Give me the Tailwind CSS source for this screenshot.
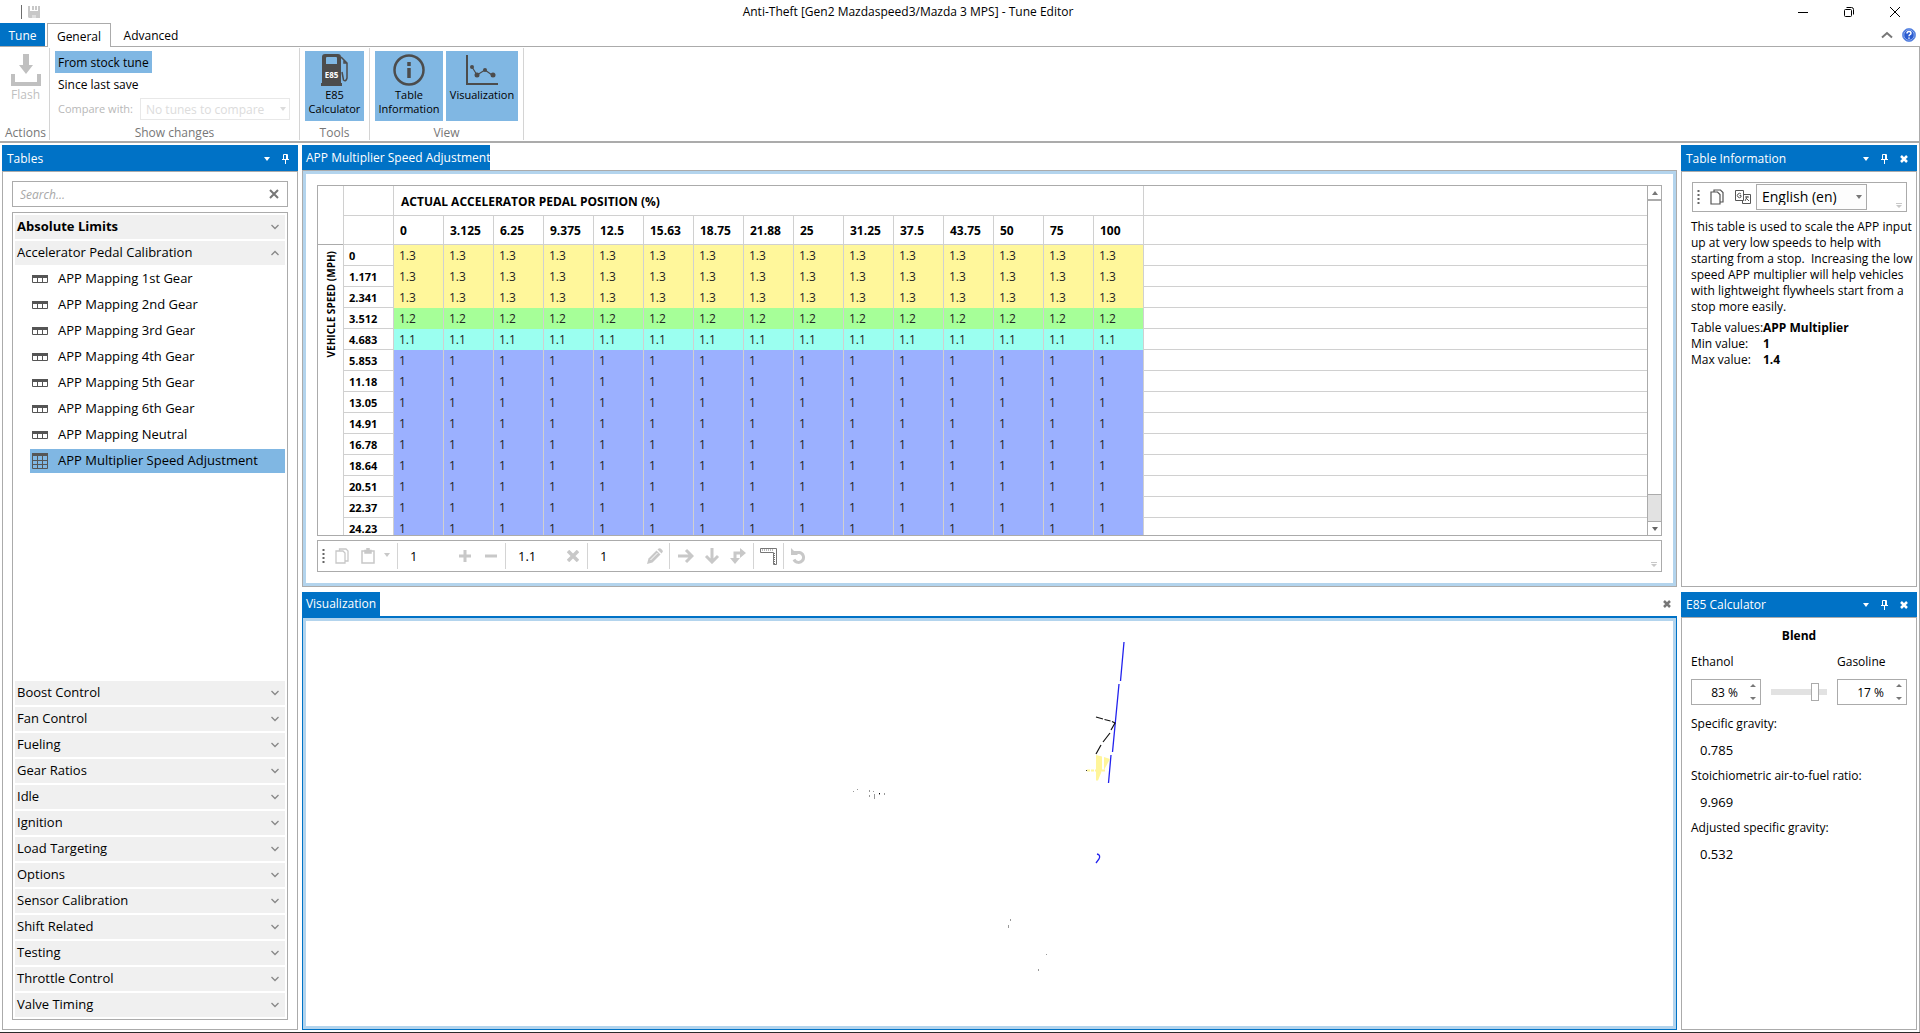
<!DOCTYPE html>
<html lang="en">
<head>
<meta charset="utf-8">
<title>Tune Editor</title>
<script src="https://cdn.jsdelivr.net/npm/@tailwindcss/browser@4"></script>
</head>
<body class="bg-white text-black text-[12px] leading-4 font-['Open_Sans','Noto_Sans',sans-serif]">
<div class="h-screen flex flex-col overflow-hidden border-b border-[#2b2b2b]">

  <header class="h-[23px] shrink-0 flex items-center">
    <div class="w-[104px] flex items-center pl-[21px] gap-[6px]">
      <span class="w-px h-[14px] bg-[#6d6d6d]"></span>
      <button aria-label="Save" class="text-[#c8c8c8]"><svg width="12" height="12" viewBox="0 0 12 12" fill="currentColor"><path d="M0 0h2v5h8V0h2v12H1l-1-1z"/><path d="M4 0h2v4H4zM7 0h2v4H7z"/><path d="M2 5h8v7H2z"/><path d="M4 9h4v3H4z" fill="#dedede"/></svg></button>
    </div>
    <h1 class="flex-1 text-center">Anti-Theft [Gen2 Mazdaspeed3/Mazda 3 MPS] - Tune Editor</h1>
    <div class="w-[208px] flex justify-end gap-[34px] pr-[19px]">
      <button aria-label="Minimize"><svg width="12" height="12" viewBox="0 0 12 12"><path d="M1 6.500h10" stroke="#000"/></svg></button>
      <button aria-label="Restore"><svg width="12" height="12" viewBox="0 0 12 12" fill="none" stroke="#000"><rect x="1.500" y="3.500" width="7" height="7" rx="1"/><path d="M3.500 1.500h5q2 0 2 2v5"/></svg></button>
      <button aria-label="Close"><svg width="12" height="12" viewBox="0 0 12 12" stroke="#000"><path d="M1 1l10 10M11 1L1 11"/></svg></button>
    </div>
  </header>

  <nav class="h-[24px] shrink-0 flex border-b border-[#ababab]">
    <button class="w-[45px] pt-[2px] bg-[#0072c6] text-white">Tune</button>
    <button class="ml-[2px] w-[64px] pt-[2px] -mb-px border border-b-0 border-[#ababab] bg-white">General</button>
    <button class="w-[80px] pt-[2px]">Advanced</button>
    <div class="ml-auto flex items-center gap-[9px] pr-[4px]">
      <button aria-label="Collapse ribbon"><svg width="12" height="8" viewBox="0 0 12 8" fill="none" stroke="#777" stroke-width="2"><path d="M1 6.500L6 2l5 4.500"/></svg></button>
      <button aria-label="Help"><svg width="14" height="14" viewBox="0 0 14 14"><circle cx="7" cy="7" r="6.500" fill="#2a5bd0" stroke="#6f97e8"/><circle cx="7" cy="7" r="5.200" fill="none" stroke="#cfe0ff" stroke-width=".6"/><path d="M5 5.500q0-2 2-2t2 1.700q0 1-1 1.500T7 8.200M7 9.400v1.400" fill="none" stroke="#fff" stroke-width="1.500"/></svg></button>
    </div>
  </nav>

  <div class="flex-1 min-h-0 flex flex-col border-r border-[#ababab]">
  <section aria-label="Ribbon" class="h-[96px] shrink-0 flex py-px border-b-2 border-[#ababab] text-center">
    <div class="w-[50px] pl-[2px] flex flex-col justify-between border-r border-[#d4d4d4] text-[#777]">
      <button disabled class="pt-[6px] text-[#c0c0c0] flex flex-col items-center">
        <svg width="30" height="32" viewBox="0 0 30 32" fill="currentColor"><path d="M12 0h6v11h4l-7 9-7-9h4zM0 20h4v8h22v-8h4v12H0z"/></svg>
        <span class="mt-px">Flash</span>
      </button>
      <span class="-mb-px">Actions</span>
    </div>
    <div class="w-[250px] flex flex-col justify-between border-r border-[#d4d4d4] text-left">
      <div class="pl-[5px] pt-[3px] flex flex-col items-start">
        <button class="h-[22px] px-[3px] pt-[2px] bg-[#80b7e3]">From stock tune</button>
        <button class="h-[22px] px-[3px] pt-[2px]">Since last save</button>
        <div class="flex items-center mt-[3px] px-[3px] gap-[5px] text-[#b8b8b8]">
          <label for="cmp" class="w-[77px] whitespace-nowrap text-[11px]">Compare with:</label>
          <div class="relative">
            <select id="cmp" disabled class="appearance-none w-[150px] h-[22px] px-[5px] pt-[2px] border border-[#e8e8e8] text-[#dcdcdc]"><option>No tunes to compare</option></select>
            <svg class="absolute right-[4px] top-[9px]" width="6" height="4" viewBox="0 0 6 4"><path d="M0 0h6L3 4z" fill="#dcdcdc"/></svg>
          </div>
        </div>
      </div>
      <span class="text-center text-[#777] -mb-px">Show changes</span>
    </div>
    <div class="w-[70px] flex flex-col justify-between items-center border-r border-[#d4d4d4]">
      <button class="mt-[3px] w-[59px] h-[70px] pt-[3px] bg-[#80b7e3] flex flex-col items-center text-[11px] leading-[14px]">
        <svg class="shrink-0" width="30" height="32" viewBox="0 0 30 32"><path fill="#4c4c4c" d="M5 0h13q3 0 3 3v26h1v3H1v-3h1V3q0-3 3-3z"/><path fill="#80b7e3" d="M6 4q0-1 1-1h9q1 0 1 1v6H6z"/><path d="M21 3l6 6v15q-1 4-3.500 2L22 18M27 9h-3V6" fill="none" stroke="#4c4c4c" stroke-width="1.500"/><text x="11.500" y="24" text-anchor="middle" font-size="8" font-weight="700" fill="#fff">E85</text></svg>
        <span class="mt-[2px]">E85<br>Calculator</span>
      </button>
      <span class="text-[#777] -mb-px">Tools</span>
    </div>
    <div class="w-[154px] flex flex-col justify-between items-center border-r border-[#d4d4d4]">
      <div class="flex gap-[3px] mt-[3px]">
        <button class="w-[68px] h-[70px] pt-[3px] bg-[#80b7e3] flex flex-col items-center text-[11px] leading-[14px]">
          <svg class="shrink-0" width="32" height="32" viewBox="0 0 32 32" fill="none" stroke="#4c4c4c"><circle cx="16" cy="16" r="14.500" stroke-width="2.500"/><path d="M16 14v10M16 8v4" stroke-width="3.500"/></svg>
          <span class="mt-[2px]">Table<br>Information</span>
        </button>
        <button class="w-[72px] h-[70px] pt-[3px] bg-[#80b7e3] flex flex-col items-center text-[11px] leading-[14px]">
          <svg class="shrink-0" width="32" height="32" viewBox="0 0 32 32" fill="none" stroke="#4c4c4c"><path d="M1 1v29h31" stroke-width="2"/><path d="M6 13l5 8 8-5 7 5" stroke-width="1.200"/><g fill="#4c4c4c" stroke="none"><circle cx="6" cy="13" r="2"/><circle cx="11" cy="21" r="2.500"/><circle cx="19" cy="16" r="2"/><circle cx="27" cy="21" r="2.500"/></g></svg>
          <span class="mt-[2px]">Visualization</span>
        </button>
      </div>
      <span class="text-[#777] -mb-px">View</span>
    </div>
  </section>

  <main class="flex-1 min-h-0 flex gap-[4px] px-[2px] pt-[2px] pb-[2px]">
    <aside class="w-[296px] shrink-0 flex flex-col">
      <div class="h-[26px] shrink-0 bg-[#0072c6] text-white flex items-center pl-[5px] pr-[9px] pt-px">
        <h2 class="flex-1">Tables</h2>
        <div data-dock="menu pin" class="flex items-center gap-[12px]"></div>
      </div>
      <div class="flex-1 min-h-0 border border-[#ababab] flex flex-col px-[9px] pt-[9px] pb-[9px] gap-[5px]">
        <div class="h-[26px] shrink-0 border border-[#ababab] flex items-center pl-[7px] pr-[8px]">
          <input aria-label="Search" placeholder="Search..." class="flex-1 min-w-0 pt-[2px] outline-none placeholder:italic placeholder:text-[#a8a8a8]">
          <button aria-label="Clear search"><svg width="10" height="10" viewBox="0 0 10 10" stroke="#777" stroke-width="2"><path d="M1 1l8 8M9 1L1 9"/></svg></button>
        </div>
        <div id="list" class="flex-1 min-h-0 border border-[#ababab] p-[2px] flex flex-col gap-[2px] text-[13px]"></div>
      </div>
    </aside>

    <div class="flex-1 min-w-0 flex flex-col gap-[5px]">
      <section class="flex-[442_1_0px] min-h-0 flex flex-col">
        <div class="h-[25px] shrink-0 flex"><button class="w-[188px] pl-[4px] text-left bg-[#0072c6] text-white whitespace-nowrap">APP Multiplier Speed Adjustment</button></div>
        <div class="flex-1 min-h-0 border border-[#ababab]">
          <div class="h-full border-3 border-[#b3d4ed] px-[11px] pt-[11px] pb-[11px] flex flex-col gap-[4px]">
            <div class="flex-1 min-h-0 border border-[#ababab] flex">
              <div class="flex-1 min-w-0 overflow-hidden">
                <table class="w-full table-fixed border-separate border-spacing-0">
                  <colgroup id="cols"><col class="w-[25px]"><col class="w-[50px]"></colgroup>
                  <thead id="thead" class="text-left"></thead>
                  <tbody id="tbody"></tbody>
                </table>
              </div>
              <div class="w-[14px] shrink-0 border-l border-[#ababab] flex flex-col">
                <button aria-label="Scroll up" class="h-[13px] flex items-center justify-center"><svg width="6" height="4" viewBox="0 0 6 4"><path d="M0 4h6L3 0z" fill="#777"/></svg></button>
                <div class="flex-1 bg-[#e2e2e2] pb-[26px]"><div class="h-full bg-white border-t-2 border-b border-[#ababab]"></div></div>
                <button aria-label="Scroll down" class="h-[14px] border-t border-[#ababab] flex items-center justify-center"><svg width="6" height="4" viewBox="0 0 6 4"><path d="M0 0h6L3 4z" fill="#666"/></svg></button>
              </div>
            </div>
            <div role="toolbar" aria-label="Edit" class="h-[32px] shrink-0 border border-[#ababab] flex items-center pl-[4px] pr-[4px] text-[#c8c8c8]">
              <svg width="3" height="16" viewBox="0 0 3 16"><path d="M1.500 1v14" stroke="#666" stroke-width="2" stroke-dasharray="2 2"/></svg>
              <button aria-label="Copy" class="ml-[10px]"><svg width="14" height="16" viewBox="0 0 14 16" fill="#fff" stroke="currentColor" stroke-width="1.300"><path d="M4.500 1h6.500l2 2v10H4.500z"/><path d="M1 3h7l2 2v10H1z"/></svg></button>
              <button aria-label="Paste" class="ml-[12px]"><svg width="14" height="16" viewBox="0 0 14 16" fill="none" stroke="currentColor" stroke-width="1.500"><path d="M1 3h12v12H1z"/><path d="M4 2.500h6v2.500H4zM6 .8h2v2H6z" fill="currentColor"/></svg></button>
              <button aria-label="Paste options" class="ml-[9px] -mt-[2px]"><svg width="6" height="4" viewBox="0 0 6 4"><path d="M0 0h6L3 4z" fill="currentColor"/></svg></button>
              <span class="ml-[7px] w-px h-[26px] bg-[#d4d4d4]"></span>
              <input aria-label="Add amount" value="1" class="w-[61px] pl-[12px] text-black text-[13px]">
              <button aria-label="Add"><svg width="12" height="12" viewBox="0 0 12 12" stroke="currentColor" stroke-width="3"><path d="M0 6h12M6 0v12"/></svg></button>
              <button aria-label="Subtract" class="ml-[14px]"><svg width="12" height="12" viewBox="0 0 12 12" stroke="currentColor" stroke-width="3"><path d="M0 6h12"/></svg></button>
              <span class="ml-[8px] w-px h-[26px] bg-[#d4d4d4]"></span>
              <input aria-label="Multiply amount" value="1.1" class="w-[61px] pl-[12px] text-black text-[13px]">
              <button aria-label="Multiply"><svg width="12" height="12" viewBox="0 0 12 12" stroke="currentColor" stroke-width="3.500"><path d="M1 1l10 10M11 1L1 11"/></svg></button>
              <span class="ml-[8px] w-px h-[26px] bg-[#d4d4d4]"></span>
              <input aria-label="Set value" value="1" class="w-[59px] pl-[12px] text-black text-[13px]">
              <button aria-label="Set"><svg width="16" height="16" viewBox="0 0 16 16"><path d="M0 16l1.500-5.500L9.500 2.500l4 4L5.500 14.500z" fill="currentColor"/><path d="M10.500 1.500Q12.500-.5 14 .800l1.200 1.200Q16.500 3.500 14.500 5.500z" fill="currentColor"/><path d="M3.500 12l7-7" stroke="#fff"/></svg></button>
              <span class="ml-[6px] w-px h-[26px] bg-[#d4d4d4]"></span>
              <button aria-label="Fill right" class="ml-[8px]"><svg width="16" height="16" viewBox="0 0 16 16" fill="none" stroke="currentColor" stroke-width="3"><path d="M0 8h13M8 2l6 6-6 6"/></svg></button>
              <button aria-label="Fill down" class="ml-[10px]"><svg width="16" height="16" viewBox="0 0 16 16" fill="none" stroke="currentColor" stroke-width="3"><path d="M8 0v13M2 8l6 6 6-6"/></svg></button>
              <button aria-label="Fill both" class="ml-[10px]"><svg width="16" height="16" viewBox="0 0 16 16"><path d="M5 12V5h6" fill="none" stroke="currentColor" stroke-width="3"/><path d="M10 0l6 5-6 5zM0 10h10l-5 6z" fill="currentColor"/></svg></button>
              <span class="ml-[7px] w-px h-[26px] bg-[#d4d4d4]"></span>
              <button aria-label="Axes" class="ml-[6px]"><svg width="17" height="17" viewBox="0 0 17 17" fill="none" stroke="#777"><path d="M.5.5h16v16h-3V4.500H.5z"/><path d="M2 2h11M14.500 5v11" stroke-dasharray="1 1"/></svg></button>
              <span class="ml-[6px] w-px h-[26px] bg-[#d4d4d4]"></span>
              <button aria-label="Undo" class="ml-[7px]"><svg width="16" height="16" viewBox="0 0 16 16"><path d="M3 4.500h5.500a5 5 0 1 1-5.500 7" fill="none" stroke="currentColor" stroke-width="3"/><path d="M0 0l7 7H0z" fill="currentColor"/></svg></button>
              <svg class="ml-auto self-end mb-[4px]" width="6" height="5" viewBox="0 0 6 5"><path d="M0 0h6v1H0zM0 2h6L3 5z" fill="currentColor"/></svg>
            </div>
          </div>
        </div>
      </section>
      <section class="flex-[438_1_0px] min-h-0 flex flex-col">
        <div class="h-[24px] shrink-0 flex items-stretch justify-between pr-[6px]">
          <button class="w-[78px] bg-[#0072c6] text-white">Visualization</button>
          <button aria-label="Close visualization"><svg width="8" height="8" viewBox="0 0 8 8" stroke="#777" stroke-width="2.500"><path d="M1 1l6 6M7 1L1 7"/></svg></button>
        </div>
        <div class="flex-1 min-h-0 border border-t-2 border-[#0072c6]">
          <div class="h-full border-3 border-[#b3d4ed]">
            <svg class="block w-full h-full" viewBox="0 0 1367 405" fill="none"><g transform="translate(-306 -621)">
              <g stroke="#2222ee" stroke-width="1.300"><path d="M1124 642l-3.500 39M1119 684l-6.500 68M1111 755l-2.500 28"/><path d="M1097 854q4 1 2 5l-3 4"/></g>
              <path d="M1096 717l7 2M1104.500 719.500l6 1.500M1112 721.500l3 1.500-4 7M1110 733l-7 9M1101 745l-5 9" stroke="#111" stroke-width="1.200"/>
              <path d="M1096 755l6 1.500v14l-4 10h-2z" fill="#fff59a"/><path d="M1104 757l6 2-6 11z" fill="#fff59a"/><path d="M1087 770.500h9M1102 770.500h4" stroke="#fff59a" stroke-width="2" stroke-dasharray="3 1"/>
              <path d="M1086 771l1-1" stroke="#333"/>
              <path d="M857 789h1v1h-1zM874 794h1v5h-1zM879 793h1v2h-1zM884 793h1v2h-1zM869 790h1v2h-1zM869 795h1v2h-1zM873 791h1v1h-1zM853 791h1v1h-1z" fill="#999"/><path d="M879 793h1v1h-1z" fill="#000"/>
              <path d="M1010 919h1v2h-1zM1008 925h1v3h-1zM1046 954h1v1h-1zM1038 969h1v2h-1z" fill="#999"/>
            </g></svg>
          </div>
        </div>
      </section>
    </div>

    <div class="w-[236px] shrink-0 flex flex-col gap-[5px]">
      <section class="flex-[442_1_0px] min-h-0 flex flex-col">
        <div class="h-[26px] shrink-0 bg-[#0072c6] text-white flex items-center pl-[5px] pr-[9px] pt-px">
          <h2 class="flex-1">Table Information</h2>
          <div data-dock="menu pin close" class="flex items-center gap-[12px]"></div>
        </div>
        <div class="flex-1 min-h-0 border border-[#ababab] px-[9px] pt-[10px]">
          <div role="toolbar" aria-label="Language" class="h-[30px] ml-px border border-[#ababab] flex items-center pl-[4px] pr-[4px]">
            <svg width="3" height="16" viewBox="0 0 3 16"><path d="M1.500 1v14" stroke="#666" stroke-width="2" stroke-dasharray="2 2"/></svg>
            <button aria-label="Copy" class="ml-[10px]"><svg width="14" height="16" viewBox="0 0 14 16" fill="#fff" stroke="#555" stroke-width="1.200"><path d="M4 1h6.500L13 3.500V13H4z"/><path d="M1 3h6.500L10 5.500V15H1z"/></svg></button>
            <button aria-label="Translate" class="ml-[11px]"><svg width="16" height="15" viewBox="0 0 16 15" fill="#fff" stroke="#555"><path d="M7.500 4.500h8v9h-8z"/><path d="M.5.5h8v10h-8z"/><path d="M6 4Q4.500 2.500 3 4t0 3 3 0V5.500H4.500M10 7h4M12 6v1l-2 4M11 8l3 3" fill="none"/></svg></button>
            <div class="relative ml-[5px]">
              <select aria-label="Language" class="appearance-none w-[111px] h-[26px] pl-[5px] border border-[#ababab] bg-[#fdfdfd] text-[14px]"><option>English (en)</option></select>
              <svg class="absolute right-[5px] top-[11px]" width="6" height="4" viewBox="0 0 6 4"><path d="M0 0h6L3 4z" fill="#777"/></svg>
            </div>
            <svg class="ml-auto self-end mb-[3px]" width="6" height="5" viewBox="0 0 6 5"><path d="M0 0h6v1H0zM0 2h6L3 5z" fill="#c8c8c8"/></svg>
          </div>
          <p class="mt-[7px] whitespace-pre">This table is used to scale the APP input
up at very low speeds to help with
starting from a stop.&nbsp; Increasing the low
speed APP multiplier will help vehicles
with lightweight flywheels start from a
stop more easily.</p>
          <dl class="mt-[5px] grid grid-cols-[72px_1fr] whitespace-nowrap">
            <dt>Table values:</dt><dd class="font-bold">APP Multiplier</dd>
            <dt>Min value:</dt><dd class="font-bold">1</dd>
            <dt>Max value:</dt><dd class="font-bold">1.4</dd>
          </dl>
        </div>
      </section>
      <section class="flex-[438_1_0px] min-h-0 flex flex-col">
        <div class="h-[25px] shrink-0 bg-[#0072c6] text-white flex items-center pl-[5px] pr-[9px]">
          <h2 class="flex-1">E85 Calculator</h2>
          <div data-dock="menu pin close" class="flex items-center gap-[12px]"></div>
        </div>
        <div class="flex-1 min-h-0 border border-[#ababab] px-[9px] pt-[10px]">
          <h3 class="text-center font-bold">Blend</h3>
          <div class="mt-[10px] grid grid-cols-[70px_56px_70px] gap-x-[10px] gap-y-[9px] items-center">
            <label for="eth">Ethanol</label><span></span><label for="gas">Gasoline</label>
            <div class="h-[26px] border border-[#ababab] flex items-center pr-[4px]"><input id="eth" value="83 %" class="flex-1 min-w-0 text-right pr-[12px] pt-[2px]"><span data-spin></span></div>
            <input aria-label="Blend ratio" type="range" min="0" max="100" value="83" class="appearance-none w-[56px] h-[18px] bg-transparent [&::-webkit-slider-runnable-track]:h-[6px] [&::-webkit-slider-runnable-track]:bg-[#e2e2e2] [&::-webkit-slider-thumb]:appearance-none [&::-webkit-slider-thumb]:w-[8px] [&::-webkit-slider-thumb]:h-[18px] [&::-webkit-slider-thumb]:-mt-[6px] [&::-webkit-slider-thumb]:bg-white [&::-webkit-slider-thumb]:border [&::-webkit-slider-thumb]:border-[#ababab]">
            <div class="h-[26px] border border-[#ababab] flex items-center pr-[4px]"><input id="gas" value="17 %" class="flex-1 min-w-0 text-right pr-[12px] pt-[2px]"><span data-spin></span></div>
          </div>
          <dl class="mt-[6px] leading-[26px]">
            <dt>Specific gravity:</dt><dd class="pl-[9px] text-[13px]">0.785</dd>
            <dt>Stoichiometric air-to-fuel ratio:</dt><dd class="pl-[9px] text-[13px]">9.969</dd>
            <dt>Adjusted specific gravity:</dt><dd class="pl-[9px] text-[13px]">0.532</dd>
          </dl>
        </div>
      </section>
    </div>
  </main>
  </div>
</div>
<script>
const $ = id => document.getElementById(id);

const dock = {
  menu: '<button aria-label="Window menu"><svg width="6" height="4" viewBox="0 0 6 4"><path d="M0 0h6L3 4z" fill="#fff"/></svg></button>',
  pin: '<button aria-label="Auto hide"><svg width="7" height="10" viewBox="0 0 7 10" fill="none" stroke="#fff"><path d="M1.500 5V.5h4V5M4.500 1v4M0 5.500h7M3.500 6v4"/></svg></button>',
  close: '<button aria-label="Close"><svg width="8" height="8" viewBox="0 0 8 8" stroke="#fff" stroke-width="2.500"><path d="M1 1l6 6M7 1L1 7"/></svg></button>'
};
document.querySelectorAll('[data-dock]').forEach(e => e.innerHTML = e.dataset.dock.split(' ').map(k => dock[k]).join(''));
document.querySelectorAll('[data-spin]').forEach(e => e.innerHTML = '<svg width="6" height="16" viewBox="0 0 6 16" fill="#777"><path d="M0 3h6L3 0zM0 13h6L3 16z"/></svg>');

const chev = up => '<svg width="8" height="6" viewBox="0 0 8 6" fill="none" stroke="#888" stroke-width="1.300"><path d="' + (up ? 'M.5 5L4 1.500 7.500 5' : 'M.5 1L4 4.500 7.500 1') + '"/></svg>';
const section = (t, up, bold) => '<button class="h-[24px] shrink-0 bg-[#f0f0f0] pl-[2px] pr-[6px] flex items-center justify-between' + (bold ? ' font-bold' : '') + '"><span class="pb-[2px]">' + t + '</span>' + chev(up) + '</button>';
const row1 = '<svg width="16" height="8" viewBox="0 0 16 8" fill="none" stroke="#555"><path d="M.5.5h15v7H.5zM5.500 3v5M10.500 3v5"/><path d="M0 1.500h16" stroke-width="3"/></svg>';
const grid = '<svg width="16" height="16" viewBox="0 0 16 16" fill="none" stroke="#555"><path d="M.5.5h15v15H.5zM5.500 3v13M10.500 3v13M0 7.500h16M0 11.500h16"/><path d="M0 1.500h16" stroke-width="3"/></svg>';
const tables = ['1st Gear', '2nd Gear', '3rd Gear', '4th Gear', '5th Gear', '6th Gear', 'Neutral'].map(s => 'APP Mapping ' + s);
$('list').innerHTML = section('Absolute Limits', false, true) + section('Accelerator Pedal Calibration', true, false) +
  '<ul class="flex-1 min-h-0 overflow-hidden flex flex-col gap-[2px] pl-[15px]">' +
  tables.map(t => '<li><button class="w-full h-[24px] pl-[2px] flex items-center gap-[10px]">' + row1 + '<span class="pb-[2px]">' + t + '</span></button></li>').join('') +
  '<li><button class="w-full h-[24px] pl-[2px] flex items-center gap-[10px] bg-[#80b7e3] whitespace-nowrap">' + grid + '<span class="pb-[2px]">APP Multiplier Speed Adjustment</span></button></li></ul>' +
  ['Boost Control', 'Fan Control', 'Fueling', 'Gear Ratios', 'Idle', 'Ignition', 'Load Targeting', 'Options', 'Sensor Calibration', 'Shift Related', 'Testing', 'Throttle Control', 'Valve Timing'].map(t => section(t, false, false)).join('');

const pedal = ['0', '3.125', '6.25', '9.375', '12.5', '15.63', '18.75', '21.88', '25', '31.25', '37.5', '43.75', '50', '75', '100'];
const speed = ['0', '1.171', '2.341', '3.512', '4.683', '5.853', '11.18', '13.05', '14.91', '16.78', '18.64', '20.51', '22.37', '24.23'];
const value = ['1.3', '1.3', '1.3', '1.2', '1.1'];
const tone = { '1.3': 'bg-[#fff79b]', '1.2': 'bg-[#a6ff98]', '1.1': 'bg-[#9bfff0]', '1': 'bg-[#9bb0ff]' };
$('cols').innerHTML += '<col class="w-[50px]">'.repeat(pedal.length) + '<col>';
$('thead').innerHTML =
  '<tr class="h-[30px]"><td rowspan="2" class="border-b border-[#ababab]"></td><td class="border-l border-b border-[#d0d0d0]"></td>' +
  '<th colspan="15" scope="colgroup" class="border-l border-b border-[#d0d0d0] pl-[7px] pt-[2px] pb-0 font-bold">ACTUAL ACCELERATOR PEDAL POSITION (%)</th><td class="border-l border-b border-[#d0d0d0]"></td></tr>' +
  '<tr class="h-[29px]"><td class="border-l border-b border-[#d0d0d0]"></td>' +
  pedal.map(p => '<th scope="col" class="border-l border-b border-[#d0d0d0] pl-[6px] pt-[2px] pb-0 font-bold">' + p + '</th>').join('') +
  '<td class="border-l border-b border-[#d0d0d0]"></td></tr>';
$('tbody').innerHTML = speed.map((s, i) => {
  const v = value[i] || '1';
  return '<tr class="h-[21px]">' +
    (i ? '' : '<th rowspan="14" scope="rowgroup" class="align-top p-0 pt-[6px] text-[10px] font-bold"><span class="inline-block [writing-mode:vertical-rl] rotate-180 whitespace-nowrap">VEHICLE SPEED (MPH)</span></th>') +
    '<th scope="row" class="border-l border-b border-[#d0d0d0] pl-[5px] pt-[2px] pb-0 text-left text-[11px] font-bold">' + s + '</th>' +
    ('<td class="border-l border-[#d0d0d0] pl-[5px] py-0 text-[#222] ' + tone[v] + '">' + v + '</td>').repeat(15) +
    '<td class="border-l border-b border-[#d0d0d0]"></td></tr>';
}).join('');
</script>
</body>
</html>
